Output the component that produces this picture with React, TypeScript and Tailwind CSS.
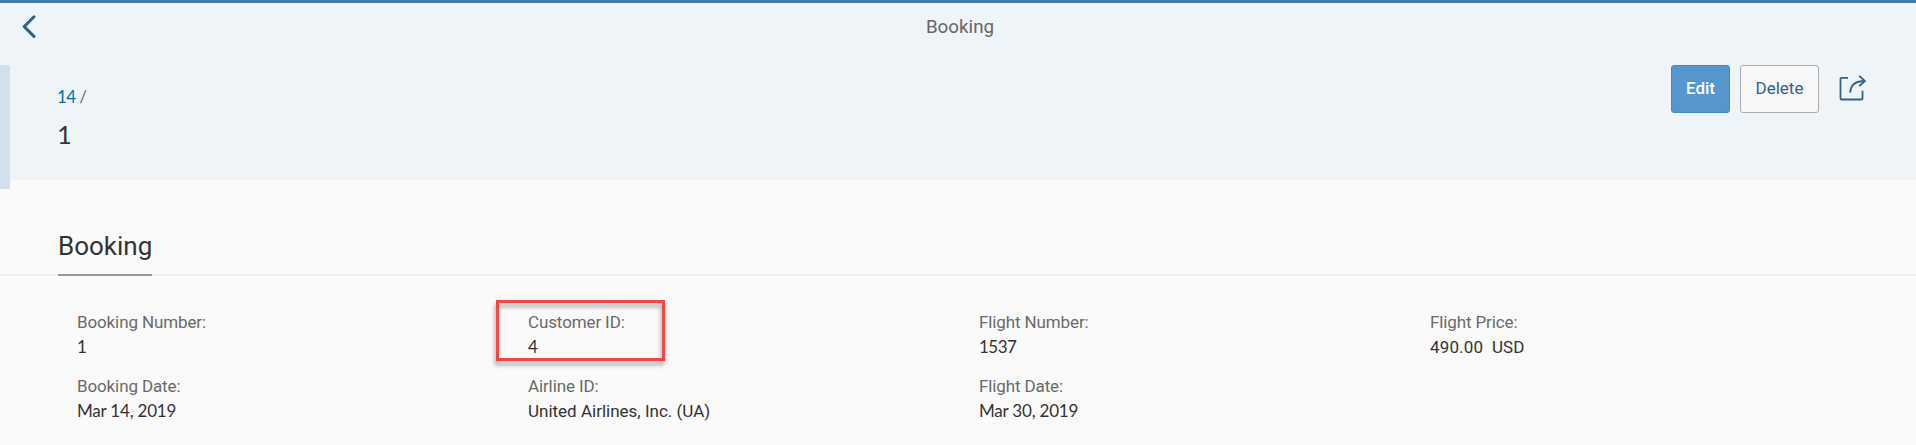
import React from "react";

type FieldData = {
  label: string;
  value: string;
  valueClass?: string;
  marked?: boolean;
};

const numeric = "font-['Lato',sans-serif] tracking-[-0.5px] -mt-px";
const date = "font-['Lato',sans-serif] tracking-[-0.2px] -mt-px";

const rows: FieldData[][] = [
  [
    { label: "Booking Number:", value: "1", valueClass: numeric },
    { label: "Customer ID:", value: "4", valueClass: numeric, marked: true },
    { label: "Flight Number:", value: "1537", valueClass: numeric },
    { label: "Flight Price:", value: "490.00\u00a0\u00a0USD", valueClass: "tracking-[0.15px]" },
  ],
  [
    { label: "Booking Date:", value: "Mar 14, 2019", valueClass: date },
    { label: "Airline ID:", value: "United Airlines, Inc. (UA)" },
    { label: "Flight Date:", value: "Mar 30, 2019", valueClass: date },
  ],
];

function Field({ label, value, valueClass = "", marked }: FieldData) {
  return (
    <div className="relative h-16 whitespace-pre text-[17px] leading-[25px]">
      <div className="tracking-[-0.12px] text-[#6a6a6a]">{label}</div>
      <div className={`text-[#333333] ${valueClass}`}>{value}</div>
      {marked && (
        <div className="absolute -left-[32px] -top-[10px] h-[61px] w-[169px] border-[3px] border-[#ff4343] drop-shadow-[-1px_4px_2px_rgba(0,0,0,0.35)]" />
      )}
    </div>
  );
}

export default function App() {
  return (
    <div className="h-[445px] w-full overflow-hidden bg-[#fafafa] font-['Roboto',sans-serif]">
      <header className="flex h-[180px] flex-col border-t-[3px] border-[#427cac] bg-[#eff4f8]">
        <div className="grid h-[62px] shrink-0 grid-cols-[60px_1fr_56px] items-start">
          <button className="pl-[22px] pt-[12px]" aria-label="Back">
            <svg width="14" height="24" viewBox="0 0 14 24" fill="none" stroke="#346187" strokeWidth="3" strokeLinecap="round" strokeLinejoin="round">
              <path d="M12 1.8 2.2 11.6 12 21.4" />
            </svg>
          </button>
          <h1 className="pt-[12px] text-center text-[18.8px] leading-6 text-[#666666]">Booking</h1>
        </div>
        <div className="flex h-[124px] shrink-0">
          <div className="w-[10px] bg-[#d1e0ee]" />
          <div className="flex-1 pl-[47px] pt-[19px]">
            <div className="font-['Lato',sans-serif] text-[17px] leading-[26px] tracking-[-0.6px] text-[#0070b1]">
              14 <span className="text-[#6a6a6a]">/</span>
            </div>
            <div className="pt-[6px] font-['Lato',sans-serif] text-[25.5px] leading-[36px] text-[#333333]">1</div>
          </div>
          <div className="flex h-12 items-stretch pr-[50px]">
            <button className="w-[59px] rounded-[3px] border border-[#418ac9] bg-[#5496cd] text-[17px] font-medium text-white">Edit</button>
            <button className="ml-[10px] w-[79px] rounded-[3px] border border-[#ababab] bg-[#f7f7f7] text-[17px] text-[#346187]">Delete</button>
            <svg className="ml-[20px] mt-[10px]" width="27" height="26" viewBox="0 0 27 26" fill="none" stroke="#346187" strokeWidth="1.8">
              <path d="M9 2.8H2.5a1 1 0 0 0-1 1v19.700a1 1 0 0 0 1 1h20a1 1 0 0 0 1-1v-7.800" />
              <path d="M11.2 17.8C11.4 10 15.5 6 26 6M20.200.8 26 6l-5.800 5.200" />
            </svg>
          </div>
        </div>
      </header>
      <main className="pt-[49px]">
        <div className="flex h-[47px] border-b-2 border-[#f0f0f0] pl-[58px]">
          <h2 className="h-[47px] w-[94px] shrink-0 whitespace-nowrap border-b-2 border-[#999999] text-[26px] leading-[34px] text-[#333333]">Booking</h2>
        </div>
        <div className="pl-[77px] pt-[34px]">
          {rows.map((row, i) => (
            <div key={i} className="grid grid-cols-[451px_451px_451px_400px]">
              {row.map((f) => (
                <Field key={f.label} {...f} />
              ))}
            </div>
          ))}
        </div>
      </main>
    </div>
  );
}
